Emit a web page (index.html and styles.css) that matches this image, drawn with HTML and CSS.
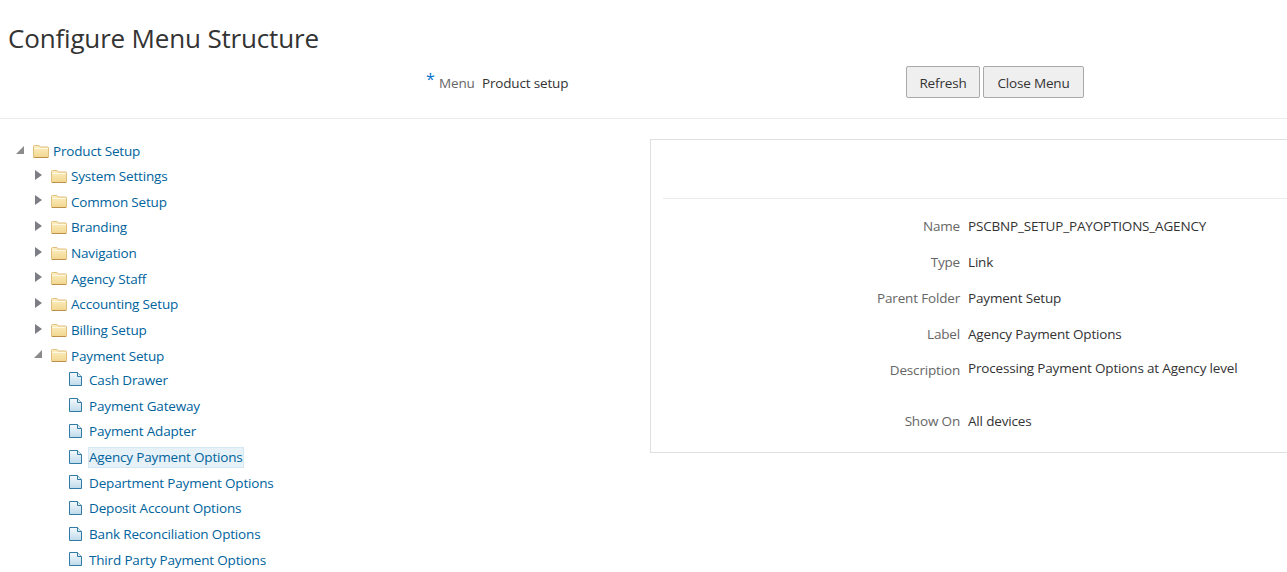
FILE: index.html
```html
<!DOCTYPE html>
<html lang="en">
<head>
<meta charset="utf-8">
<title>Configure Menu Structure</title>
<link rel="stylesheet" href="styles.css">
</head>
<body>
<svg class="defs" width="0" height="0" aria-hidden="true">
  <defs>
    <linearGradient id="fg" x1="0" y1="0" x2="0" y2="1">
      <stop offset="0" stop-color="#fdf0c4"/>
      <stop offset="1" stop-color="#f1d68f"/>
    </linearGradient>
    <linearGradient id="dg" x1="0" y1="0" x2="0" y2="1">
      <stop offset="0" stop-color="#f6fafd"/>
      <stop offset="1" stop-color="#bedaea"/>
    </linearGradient>
    <symbol id="folder" viewBox="0 0 16 14">
      <path d="M.5 13V2.5q0-1 1-1H6l1 1.5h7.5q1 0 1 1V13q0 .5-.5.5H1q-.5 0-.5-.5z" fill="url(#fg)" stroke="#e0bf7c"/>
      <path d="M1 4.5h14" stroke="#fff8e0" fill="none"/>
      <path d="M1 13.5h14" stroke="#bd9049" fill="none"/>
    </symbol>
    <symbol id="doc" viewBox="0 0 13 14">
      <path d="M.5.5h8l4 4v9H.5z" fill="url(#dg)" stroke="#2f7ba6"/>
      <path d="M8.5.5v4h4" fill="#e4f0f7" stroke="#2f7ba6"/>
    </symbol>
  </defs>
</svg>
<header class="page-head">
  <h1 class="title">Configure Menu Structure</h1>
  <div class="toolbar">
    <div class="menu-field">
      <span class="req">*</span>
      <span class="label">Menu</span>
      <span class="value">Product setup</span>
    </div>
    <div class="actions">
      <button class="btn" type="button">Refresh</button>
      <button class="btn btn-wide" type="button">Close Menu</button>
    </div>
  </div>
</header>
<main class="content">
  <ul class="tree">
    <li class="row"><span class="twist open top"></span><svg class="ico-folder"><use href="#folder"/></svg><a class="link">Product Setup</a></li>
    <li class="row l1 first-l1"><span class="twist closed"></span><svg class="ico-folder"><use href="#folder"/></svg><a class="link">System Settings</a></li>
    <li class="row l1"><span class="twist closed"></span><svg class="ico-folder"><use href="#folder"/></svg><a class="link">Common Setup</a></li>
    <li class="row l1"><span class="twist closed"></span><svg class="ico-folder"><use href="#folder"/></svg><a class="link">Branding</a></li>
    <li class="row l1"><span class="twist closed"></span><svg class="ico-folder"><use href="#folder"/></svg><a class="link">Navigation</a></li>
    <li class="row l1"><span class="twist closed"></span><svg class="ico-folder"><use href="#folder"/></svg><a class="link">Agency Staff</a></li>
    <li class="row l1"><span class="twist closed"></span><svg class="ico-folder"><use href="#folder"/></svg><a class="link">Accounting Setup</a></li>
    <li class="row l1"><span class="twist closed"></span><svg class="ico-folder"><use href="#folder"/></svg><a class="link">Billing Setup</a></li>
    <li class="row l1"><span class="twist open"></span><svg class="ico-folder"><use href="#folder"/></svg><a class="link">Payment Setup</a></li>
    <li class="row l2 first-l2"><svg class="ico-doc"><use href="#doc"/></svg><a class="link">Cash Drawer</a></li>
    <li class="row l2"><svg class="ico-doc"><use href="#doc"/></svg><a class="link">Payment Gateway</a></li>
    <li class="row l2"><svg class="ico-doc"><use href="#doc"/></svg><a class="link">Payment Adapter</a></li>
    <li class="row l2"><svg class="ico-doc"><use href="#doc"/></svg><a class="link selected">Agency Payment Options</a></li>
    <li class="row l2"><svg class="ico-doc"><use href="#doc"/></svg><a class="link">Department Payment Options</a></li>
    <li class="row l2"><svg class="ico-doc"><use href="#doc"/></svg><a class="link">Deposit Account Options</a></li>
    <li class="row l2"><svg class="ico-doc"><use href="#doc"/></svg><a class="link">Bank Reconciliation Options</a></li>
    <li class="row l2"><svg class="ico-doc"><use href="#doc"/></svg><a class="link">Third Party Payment Options</a></li>
  </ul>
  <section class="panel">
    <div class="panel-head"></div>
    <dl class="details">
      <div class="field"><dt>Name</dt><dd>PSCBNP_SETUP_PAYOPTIONS_AGENCY</dd></div>
      <div class="field"><dt>Type</dt><dd>Link</dd></div>
      <div class="field"><dt>Parent Folder</dt><dd>Payment Setup</dd></div>
      <div class="field"><dt>Label</dt><dd>Agency Payment Options</dd></div>
      <div class="field tall"><dt>Description</dt><dd>Processing Payment Options at Agency level</dd></div>
      <div class="field"><dt>Show On</dt><dd>All devices</dd></div>
    </dl>
  </section>
</main>
</body>
</html>
```
FILE: styles.css
```css
* { box-sizing: border-box; }
html, body { margin: 0; height: 100%; overflow: hidden; background: #fff; }
body {
  font-family: "Open Sans", "Noto Sans", sans-serif;
  font-size: 13.5px;
  letter-spacing: -0.17px;
  color: #333;
  width: 1287px;
  height: 572px;
}
.defs { position: absolute; }
.page-head { height: 119px; border-bottom: 1px solid #ebebeb; padding: 20px 0 0 8px; }
.title { margin: 0; font-size: 26px; letter-spacing: -0.17px; font-weight: 400; line-height: 36px; color: #333; }
.toolbar { display: flex; height: 34px; margin-top: 9px; align-items: center; }
.menu-field { margin-left: 418px; width: 480px; display: flex; align-items: center; padding-top: 2px; }
.req { color: #0572ce; font-size: 16px; width: 13px; line-height: 18px; position: relative; top: -4px; }
.label { color: #666; margin-right: 7.4px; }
.value { color: #333; }
.actions { display: flex; gap: 3px; }
.btn {
  width: 74px;
  height: 32px;
  padding: 1px 0 0;
  font: inherit;
  letter-spacing: inherit;
  color: #333;
  background: #efefef;
  border: 1px solid #a9a9a9;
  border-radius: 2px;
}
.btn-wide { width: 101px; }
.content { display: flex; padding-top: 20px; }
.tree { list-style: none; margin: 0; padding: 0 0 0 16px; width: 650px; flex: none; }
.row { display: flex; align-items: center; height: 25.65px; }
.l1 { padding-left: 18px; height: 25.7px; }
.first-l1 { margin-top: -0.95px; }
.first-l2 { margin-top: -1.6px; }
.l2 { padding-left: 53px; height: 25.7px; }
.twist { width: 17px; height: 12px; flex: none; position: relative; top: -2px; }
.twist::before { content: ""; position: absolute; left: 1px; top: 1px; border-style: solid; }
.twist.closed::before { border-width: 5px 0 5px 7px; border-color: transparent transparent transparent #7d7d85; }
.twist.open::before { left: 0; top: 2px; border-width: 0 0 8px 8px; border-color: transparent transparent #8b8b8b transparent; }
.ico-folder { width: 16px; height: 14px; flex: none; margin-right: 3px; position: relative; top: -1px; }
.ico-doc { width: 13px; height: 14px; flex: none; margin-right: 6px; position: relative; top: -1px; }
.link { color: #00639c; padding: 0 1px; line-height: 19px; }
.selected { padding: 1px; line-height: 19px; background: #e6f1f8; box-shadow: inset 0 0 0 1px #d6e8f3; }
.panel {
  width: 660px;
  height: 314px;
  border: 1px solid #e0e0e0;
  border-right: 0;
  padding: 0 0 0 12px;
}
.panel-head { height: 59px; border-bottom: 1px solid #ebebeb; }
.details { margin: 9px 0 0; }
.field { display: flex; height: 36px; align-items: center; }
.field.tall { height: 51px; align-items: flex-start; padding-top: 9px; }
.field dt { width: 297px; text-align: right; color: #666; margin-right: 8px; flex: none; }
.field dd { margin: 0; color: #333; }
.field.tall dd { position: relative; top: -2px; }
```
